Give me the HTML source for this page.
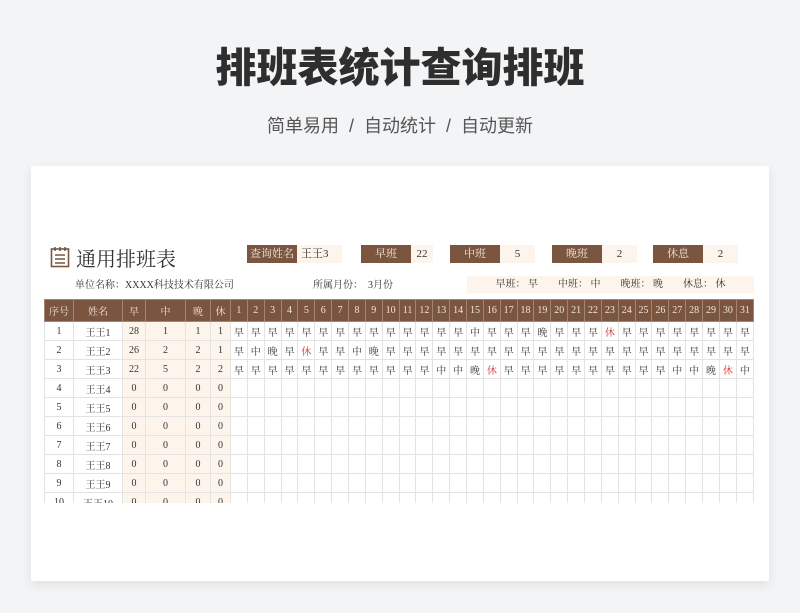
<!DOCTYPE html>
<html><head><meta charset="utf-8"><style>
*{margin:0;padding:0;box-sizing:border-box}
body{width:800px;height:613px;background:#f3f4f6;font-family:"Liberation Serif","Noto Serif CJK SC",serif;position:relative;overflow:hidden;color:#333}
.t{position:absolute;left:0;width:800px;text-align:center;font-family:"Liberation Sans","Noto Sans CJK SC",sans-serif}
.h1{top:34px;font-size:41px;font-weight:900;color:#2e2e2e;letter-spacing:0px}
.h2{top:112px;font-size:18px;color:#555}
.card{position:absolute;left:31px;top:166px;width:738px;height:415px;background:#fff;box-shadow:0 4px 10px rgba(0,0,0,.08)}
.a{position:absolute;font-size:11px;line-height:18px;text-align:center}
.d{background:#7a5540;color:#f3e6dc}
.l{background:#fdf5ec;color:#333}
table{position:absolute;left:13px;top:133px;width:710px;border-collapse:collapse;table-layout:fixed;font-size:10px}
td,th{border:1px solid #e3e3e3;text-align:center;height:19px;padding:0;font-weight:normal;white-space:nowrap;overflow:hidden}
th{background:#7a5540;color:#f1e4d8;border-color:#a6846f;height:22px}
td.c{background:#fdf5ec}
.r{color:#d33}
.wrap{position:absolute;left:0;top:0;width:738px;height:337px;overflow:hidden}
</style></head><body>
<div class="t h1">排班表统计查询排班</div>
<div class="t h2">简单易用 &nbsp;/&nbsp; 自动统计 &nbsp;/&nbsp; 自动更新</div>
<div class="card">
<svg style="position:absolute;left:19px;top:80px" width="20" height="22" viewBox="0 0 20 22"><rect x="1.5" y="3" width="17" height="17.5" fill="none" stroke="#7a5540" stroke-width="1.6"/><path d="M5 1v4M10 1v4M15 1v4M5 9h10M5 13h10M5 17h10" stroke="#7a5540" stroke-width="1.6"/></svg>
<div style="position:absolute;left:45px;top:81px;font-size:20px;line-height:26px">通用排班表</div>
<div class="a d" style="left:216px;top:79px;width:50px">查询姓名</div>
<div class="a l" style="left:266px;top:79px;width:45px;text-align:left;padding-left:4px">王王3</div>
<div class="a d" style="left:330px;top:79px;width:50px">早班</div>
<div class="a l" style="left:380px;top:79px;width:22px">22</div>
<div class="a d" style="left:419px;top:79px;width:50px">中班</div>
<div class="a l" style="left:469px;top:79px;width:35px">5</div>
<div class="a d" style="left:521px;top:79px;width:50px">晚班</div>
<div class="a l" style="left:571px;top:79px;width:35px">2</div>
<div class="a d" style="left:622px;top:79px;width:50px">休息</div>
<div class="a l" style="left:672px;top:79px;width:35px">2</div>
<div style="position:absolute;left:44px;top:110px;font-size:10px">单位名称：XXXX科技技术有限公司</div>
<div style="position:absolute;left:282px;top:110px;font-size:10px">所属月份： &nbsp;3月份</div>
<div class="a l" style="left:436px;top:110px;width:287px;height:17px;line-height:17px;font-size:10px;word-spacing:0">早班： 早 &nbsp;&nbsp;&nbsp;&nbsp;&nbsp;&nbsp; 中班： 中 &nbsp;&nbsp;&nbsp;&nbsp;&nbsp;&nbsp; 晚班： 晚 &nbsp;&nbsp;&nbsp;&nbsp;&nbsp;&nbsp; 休息： 休</div>
<div class="wrap">
<table>
<colgroup><col style="width:29px"><col style="width:49px"><col style="width:23px"><col style="width:40px"><col style="width:25px"><col style="width:20px"><col span="31"></colgroup>
<tr><th>序号</th><th>姓名</th><th>早</th><th>中</th><th>晚</th><th>休</th><th>1</th><th>2</th><th>3</th><th>4</th><th>5</th><th>6</th><th>7</th><th>8</th><th>9</th><th>10</th><th>11</th><th>12</th><th>13</th><th>14</th><th>15</th><th>16</th><th>17</th><th>18</th><th>19</th><th>20</th><th>21</th><th>22</th><th>23</th><th>24</th><th>25</th><th>26</th><th>27</th><th>28</th><th>29</th><th>30</th><th>31</th></tr>
<tr><td>1</td><td>王王1</td><td class="c">28</td><td class="c">1</td><td class="c">1</td><td class="c">1</td><td>早</td><td>早</td><td>早</td><td>早</td><td>早</td><td>早</td><td>早</td><td>早</td><td>早</td><td>早</td><td>早</td><td>早</td><td>早</td><td>早</td><td>中</td><td>早</td><td>早</td><td>早</td><td>晚</td><td>早</td><td>早</td><td>早</td><td class="r">休</td><td>早</td><td>早</td><td>早</td><td>早</td><td>早</td><td>早</td><td>早</td><td>早</td></tr>
<tr><td>2</td><td>王王2</td><td class="c">26</td><td class="c">2</td><td class="c">2</td><td class="c">1</td><td>早</td><td>中</td><td>晚</td><td>早</td><td class="r">休</td><td>早</td><td>早</td><td>中</td><td>晚</td><td>早</td><td>早</td><td>早</td><td>早</td><td>早</td><td>早</td><td>早</td><td>早</td><td>早</td><td>早</td><td>早</td><td>早</td><td>早</td><td>早</td><td>早</td><td>早</td><td>早</td><td>早</td><td>早</td><td>早</td><td>早</td><td>早</td></tr>
<tr><td>3</td><td>王王3</td><td class="c">22</td><td class="c">5</td><td class="c">2</td><td class="c">2</td><td>早</td><td>早</td><td>早</td><td>早</td><td>早</td><td>早</td><td>早</td><td>早</td><td>早</td><td>早</td><td>早</td><td>早</td><td>中</td><td>中</td><td>晚</td><td class="r">休</td><td>早</td><td>早</td><td>早</td><td>早</td><td>早</td><td>早</td><td>早</td><td>早</td><td>早</td><td>早</td><td>中</td><td>中</td><td>晚</td><td class="r">休</td><td>中</td></tr>
<tr><td>4</td><td>王王4</td><td class="c">0</td><td class="c">0</td><td class="c">0</td><td class="c">0</td><td></td><td></td><td></td><td></td><td></td><td></td><td></td><td></td><td></td><td></td><td></td><td></td><td></td><td></td><td></td><td></td><td></td><td></td><td></td><td></td><td></td><td></td><td></td><td></td><td></td><td></td><td></td><td></td><td></td><td></td><td></td></tr>
<tr><td>5</td><td>王王5</td><td class="c">0</td><td class="c">0</td><td class="c">0</td><td class="c">0</td><td></td><td></td><td></td><td></td><td></td><td></td><td></td><td></td><td></td><td></td><td></td><td></td><td></td><td></td><td></td><td></td><td></td><td></td><td></td><td></td><td></td><td></td><td></td><td></td><td></td><td></td><td></td><td></td><td></td><td></td><td></td></tr>
<tr><td>6</td><td>王王6</td><td class="c">0</td><td class="c">0</td><td class="c">0</td><td class="c">0</td><td></td><td></td><td></td><td></td><td></td><td></td><td></td><td></td><td></td><td></td><td></td><td></td><td></td><td></td><td></td><td></td><td></td><td></td><td></td><td></td><td></td><td></td><td></td><td></td><td></td><td></td><td></td><td></td><td></td><td></td><td></td></tr>
<tr><td>7</td><td>王王7</td><td class="c">0</td><td class="c">0</td><td class="c">0</td><td class="c">0</td><td></td><td></td><td></td><td></td><td></td><td></td><td></td><td></td><td></td><td></td><td></td><td></td><td></td><td></td><td></td><td></td><td></td><td></td><td></td><td></td><td></td><td></td><td></td><td></td><td></td><td></td><td></td><td></td><td></td><td></td><td></td></tr>
<tr><td>8</td><td>王王8</td><td class="c">0</td><td class="c">0</td><td class="c">0</td><td class="c">0</td><td></td><td></td><td></td><td></td><td></td><td></td><td></td><td></td><td></td><td></td><td></td><td></td><td></td><td></td><td></td><td></td><td></td><td></td><td></td><td></td><td></td><td></td><td></td><td></td><td></td><td></td><td></td><td></td><td></td><td></td><td></td></tr>
<tr><td>9</td><td>王王9</td><td class="c">0</td><td class="c">0</td><td class="c">0</td><td class="c">0</td><td></td><td></td><td></td><td></td><td></td><td></td><td></td><td></td><td></td><td></td><td></td><td></td><td></td><td></td><td></td><td></td><td></td><td></td><td></td><td></td><td></td><td></td><td></td><td></td><td></td><td></td><td></td><td></td><td></td><td></td><td></td></tr>
<tr><td>10</td><td>王王10</td><td class="c">0</td><td class="c">0</td><td class="c">0</td><td class="c">0</td><td></td><td></td><td></td><td></td><td></td><td></td><td></td><td></td><td></td><td></td><td></td><td></td><td></td><td></td><td></td><td></td><td></td><td></td><td></td><td></td><td></td><td></td><td></td><td></td><td></td><td></td><td></td><td></td><td></td><td></td><td></td></tr>
</table>
</div>
</div>
</body></html>
